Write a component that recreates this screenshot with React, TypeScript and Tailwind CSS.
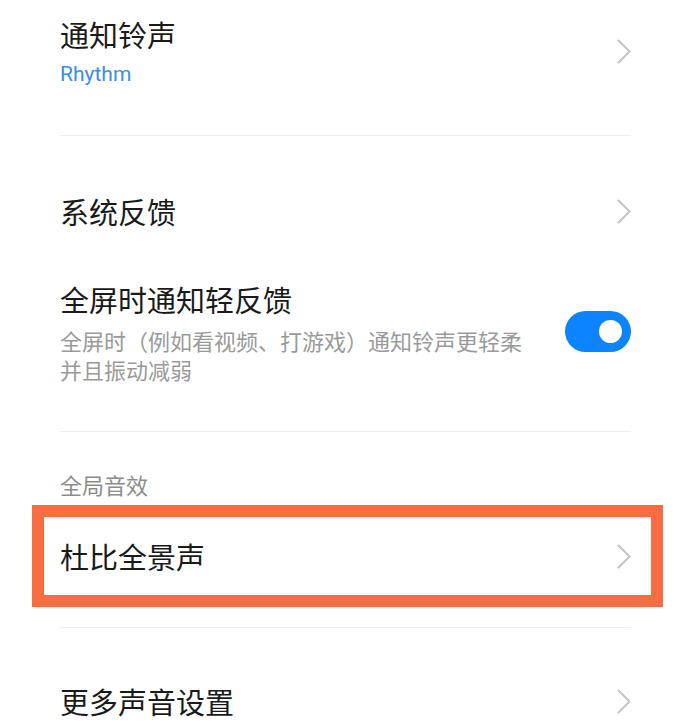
import React from "react";

const FONT = { fontFamily: '"Noto Sans CJK SC", "Noto Sans", Roboto, sans-serif' };

const Chevron = () => (
  <svg width="14" height="25" viewBox="0 0 14 25" fill="none" className="shrink-0">
    <path d="M1.5 1.5 L12.5 12.5 L1.5 23.5" stroke="#c4c4c4" strokeWidth="2" strokeLinecap="round" strokeLinejoin="round" />
  </svg>
);

const Divider = ({ className }: { className: string }) => (
  <div className={`h-px bg-[#efefef] ${className}`} />
);

const Toggle = () => (
  <div className="w-[66px] h-[41px] rounded-full bg-[#0d84ff] flex items-center justify-end pr-[9px] shrink-0">
    <div className="w-[23px] h-[23px] rounded-full bg-white" />
  </div>
);

export default function App() {
  return (
    <div className="w-[696px] h-[724px] bg-white overflow-hidden pl-[60px] pr-[65px]" style={FONT}>
      {/* 通知铃声 */}
      <div className="flex items-center justify-between pt-[14px]">
        <div>
          <div className="text-[29px] leading-[40px] text-[#1a1a1a]">通知铃声</div>
          <div className="mt-[6px] text-[21px] leading-[28px] text-[#3a8ee6]" style={{ fontFamily: 'Roboto, "Noto Sans", sans-serif' }}>
            Rhythm
          </div>
        </div>
        <Chevron />
      </div>
      <Divider className="mt-[47px]" />

      {/* 系统反馈 */}
      <div className="mt-[55px] flex items-center justify-between">
        <div className="text-[29px] leading-[40px] text-[#1a1a1a]">系统反馈</div>
        <Chevron />
      </div>

      {/* 全屏时通知轻反馈 */}
      <div className="mt-[48px] flex items-center justify-between">
        <div className="w-[470px]">
          <div className="text-[29px] leading-[40px] text-[#1a1a1a]">全屏时通知轻反馈</div>
          <div className="mt-[7px] text-[22px] leading-[29px] text-[#9a9a9a]">
            全屏时（例如看视频、打游戏）通知铃声更轻柔并且振动减弱
          </div>
        </div>
        <Toggle />
      </div>
      <Divider className="mt-[47px]" />

      {/* 全局音效 */}
      <div className="mt-[37px] text-[22px] leading-[30px] text-[#8c8c8c]">全局音效</div>

      {/* 杜比全景声 */}
      <div className="relative mt-[37px] flex items-center justify-between">
        <div className="text-[29px] leading-[40px] text-[#1a1a1a]">杜比全景声</div>
        <Chevron />
        <div className="absolute -top-[31px] -bottom-[31px] -left-[28px] -right-[32px] border-[12px] border-[#f76d42] pointer-events-none" />
      </div>
      <Divider className="mt-[51px]" />

      {/* 更多声音设置 */}
      <div className="mt-[53px] flex items-center justify-between">
        <div className="text-[29px] leading-[40px] text-[#1a1a1a]">更多声音设置</div>
        <Chevron />
      </div>
    </div>
  );
}
